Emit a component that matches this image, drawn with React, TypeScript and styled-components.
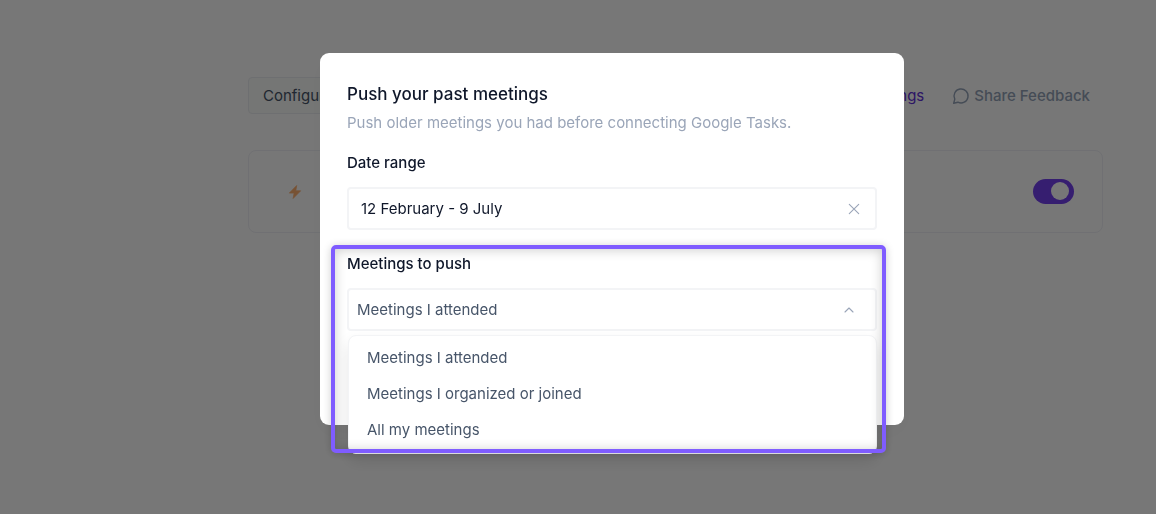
import React from "react";
import styled, { createGlobalStyle } from "styled-components";

const GlobalStyle = createGlobalStyle`
  *, *::before, *::after { box-sizing: border-box; }
  body {
    margin: 0;
    background: #ffffff;
    font-family: Inter, "Liberation Sans", sans-serif;
    font-size: 15px;
    line-height: 24px;
    color: #0f172a;
  }
  button, input, select { font: inherit; color: inherit; margin: 0; }
`;

const Page = styled.main`
  min-height: 100vh;
  padding: 77px 53px 0 248px;
`;

const Toolbar = styled.header`
  display: flex;
  align-items: center;
  gap: 28px;
  padding-right: 13px;
  margin-bottom: 36px;
`;

const ConfigureButton = styled.button`
  height: 37px;
  padding: 0 14px;
  margin-right: auto;
  border: 1px solid #eceef2;
  border-radius: 4px;
  background: #fafcfb;
  color: #475569;
`;

const SettingsLink = styled.a`
  color: #6231d8;
  text-decoration: none;
`;

const FeedbackLink = styled.a`
  display: flex;
  align-items: center;
  gap: 4px;
  color: #94a3b8;
  font-weight: 500;
  text-decoration: none;
`;

const Card = styled.section`
  display: flex;
  align-items: center;
  justify-content: space-between;
  height: 83px;
  padding: 0 28px 0 38px;
  border: 1px solid #f0f1f6;
  border-radius: 8px;
`;

const Switch = styled.input`
  appearance: none;
  display: flex;
  justify-content: flex-end;
  width: 41px;
  height: 25px;
  padding: 3px 5px;
  border-radius: 13px;
  background: #7541f0;
  &::before {
    content: "";
    width: 18px;
    height: 18px;
    border-radius: 50%;
    background: #ffffff;
  }
`;

const Overlay = styled.div`
  position: fixed;
  inset: 0;
  display: flex;
  justify-content: center;
  align-items: flex-start;
  padding: 53px 0 0 68px;
  background: rgba(0, 0, 0, 0.535);
`;

const Dialog = styled.div`
  width: 100%;
  max-width: 584px;
  padding: 27px 27px 94px;
  border-radius: 9px;
  background: #ffffff;
  box-shadow: 0 8px 24px rgba(0, 0, 0, 0.04);
`;

const Title = styled.h2`
  margin: 0 0 3px;
  font-size: 17px;
  line-height: 28px;
  font-weight: 500;
`;

const Description = styled.p`
  margin: 0 0 16px;
  color: #9aa5b8;
`;

const Field = styled.div`
  position: relative;
  display: flex;
  flex-direction: column;
  gap: 12px;
  & + & { margin-top: 22px; }
`;

const Label = styled.label`
  font-weight: 500;
`;

const Control = styled.div`
  display: flex;
  align-items: center;
  position: relative;
  height: 43px;
  border: 2px solid #f3f4f6;
  border-radius: 4px;
  background: #ffffff;
`;

const DateInput = styled.input`
  flex: 1;
  min-width: 0;
  height: 100%;
  padding: 0 12px;
  border: 0;
  background: transparent;
  outline: none;
`;

const ClearButton = styled.button`
  display: flex;
  padding: 0;
  margin-right: 14px;
  border: 0;
  background: transparent;
  color: #9aa5b8;
`;

const Select = styled.select`
  appearance: none;
  width: 100%;
  height: 100%;
  padding: 0 40px 0 8px;
  border: 0;
  background: transparent;
  color: #475569;
  outline: none;
`;

const SelectArrow = styled.svg`
  position: absolute;
  right: 19px;
  color: #9aa5b8;
  pointer-events: none;
`;

const Menu = styled.ul`
  position: absolute;
  top: 100%;
  left: 1px;
  right: 0;
  margin: 4px 0 0;
  padding: 4px 0 5px;
  list-style: none;
  border: 1px solid #f3f4f6;
  border-radius: 8px;
  background: #ffffff;
  color: #475569;
  box-shadow: 0 8px 16px rgba(0, 0, 0, 0.1);
`;

const Option = styled.li`
  padding: 6px 18px;
`;

const Highlight = styled.div`
  position: absolute;
  inset: -7px -9px -122px -16px;
  border: 4px solid #7f5cff;
  border-radius: 5px;
  box-shadow: 0 1px 8px rgba(0, 0, 0, 0.2), inset 0 1px 12px rgba(0, 0, 0, 0.2);
  pointer-events: none;
`;

const choices = ["Meetings I attended", "Meetings I organized or joined", "All my meetings"];

export default function App() {
  return (
    <>
      <GlobalStyle />
      <Page>
        <Toolbar>
          <ConfigureButton type="button">Configure</ConfigureButton>
          <SettingsLink href="#settings">Settings</SettingsLink>
          <FeedbackLink href="#feedback">
            <svg width="18" height="18" viewBox="0 0 18 18" fill="none" stroke="currentColor" strokeWidth="1.4" strokeLinecap="round" strokeLinejoin="round" aria-hidden="true">
              <path d="M2.8 12.1A7 7 0 1 1 5.9 15.2L1.7 16.3Z" />
            </svg>
            Share Feedback
          </FeedbackLink>
        </Toolbar>
        <Card>
          <svg width="16" height="16" viewBox="0 0 16 16" fill="#ffb070" aria-hidden="true">
            <path d="M9.7 1.5 2.3 9.1h4.8l-1 5.4 7.6-7.7H8.8Z" stroke="#ffb070" strokeWidth=".7" strokeLinejoin="round" />
          </svg>
          <Switch type="checkbox" role="switch" aria-label="Automation" defaultChecked />
        </Card>
      </Page>
      <Overlay>
        <Dialog role="dialog" aria-modal="true" aria-labelledby="push-title">
          <Title id="push-title">Push your past meetings</Title>
          <Description>Push older meetings you had before connecting Google Tasks.</Description>
          <Field>
            <Label htmlFor="date-range">Date range</Label>
            <Control>
              <DateInput id="date-range" defaultValue="12 February - 9 July" />
              <ClearButton type="button" aria-label="Clear date range">
                <svg width="14" height="14" viewBox="0 0 14 14" fill="none" stroke="currentColor" strokeWidth="1.1" strokeLinecap="round">
                  <path d="m2.3 2.3 9.4 9.4M11.7 2.3l-9.4 9.4" />
                </svg>
              </ClearButton>
            </Control>
          </Field>
          <Field>
            <Label htmlFor="meetings">Meetings to push</Label>
            <Control>
              <Select id="meetings" defaultValue={choices[0]}>
                {choices.map((choice) => (
                  <option key={choice}>{choice}</option>
                ))}
              </Select>
              <SelectArrow width="14" height="14" viewBox="0 0 14 14" fill="none" stroke="currentColor" strokeWidth="1.1" strokeLinecap="round" strokeLinejoin="round" aria-hidden="true">
                <path d="m3 9 4-4 4 4" />
              </SelectArrow>
            </Control>
            <Menu role="listbox" aria-label="Meetings to push">
              {choices.map((choice, index) => (
                <Option key={choice} role="option" aria-selected={index === 0}>
                  {choice}
                </Option>
              ))}
            </Menu>
            <Highlight />
          </Field>
        </Dialog>
      </Overlay>
    </>
  );
}
